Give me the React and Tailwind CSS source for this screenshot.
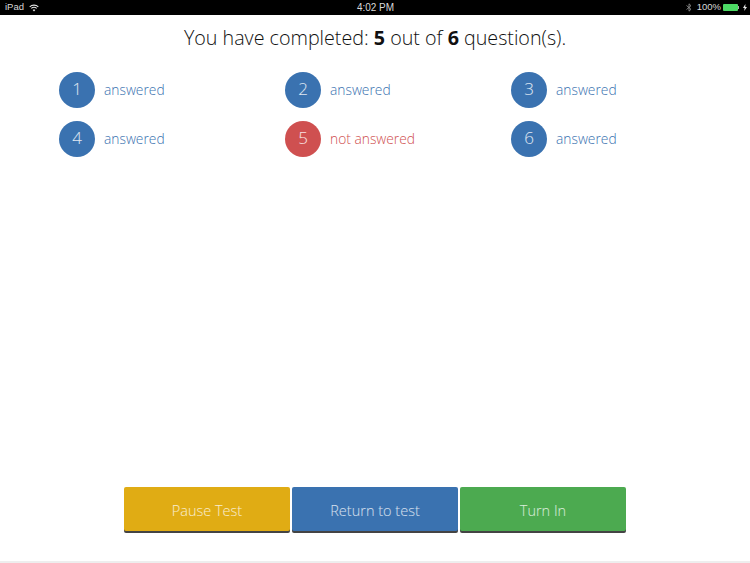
import React from 'react';

const questions = [
  { id: 1, answered: true },
  { id: 2, answered: true },
  { id: 3, answered: true },
  { id: 4, answered: true },
  { id: 5, answered: false },
  { id: 6, answered: true },
];

const StatusBar = () => (
  <div className="h-[15px] bg-black text-[#d8d8d8] text-[9.5px] font-['Liberation_Sans',sans-serif] flex items-center justify-between pl-[5px] pr-[3px] relative">
    <div className="flex items-center gap-[5px]">
      <span>iPad</span>
      <svg width="10" height="8" viewBox="0 0 10 8" fill="none" stroke="#e8e8e8">
        <path d="M0.7 2.8C3 0.6 7 0.6 9.3 2.8" strokeWidth="1.1" />
        <path d="M2.3 4.4C3.8 3.1 6.2 3.1 7.7 4.4" strokeWidth="1.1" />
        <path d="M5 7.6L3.7 6C4.4 5.4 5.6 5.4 6.3 6Z" fill="#e8e8e8" stroke="none" />
      </svg>
    </div>
    <span className="absolute left-[1px] right-0 text-center text-[10px]">4:02 PM</span>
    <div className="flex items-center">
      <svg width="6" height="9" viewBox="0 0 6 9" fill="none" stroke="#999" strokeWidth="0.8" className="mr-[5px]">
        <path d="M0.5 2.5L5 6.3L3 8.2V0.8L5 2.7L0.5 6.5" />
      </svg>
      <span>100%</span>
      <div className="w-[15px] h-[7px] bg-[#4cd964] rounded-[1px] ml-[2px]"></div>
      <div className="w-[1px] h-[3px] bg-[#aaa] mr-[4px]"></div>
      <svg width="4" height="7" viewBox="0 0 4 7" fill="#e8e8e8">
        <path d="M2.4 0L0 3.9H1.6L1.2 7L4 2.9H2.3Z" />
      </svg>
    </div>
  </div>
);

const QuestionItem = ({ id, answered }) => (
  <div className="flex items-center h-[37px]">
    <div className={`w-[36px] h-[36px] rounded-full flex items-center justify-center pb-[1px] text-white/85 text-[17px] font-light ${answered ? 'bg-[#3a72b0]' : 'bg-[#cf5050]'}`}>
      {id}
    </div>
    <span className={`ml-[9px] pt-[2px] text-[13.8px] font-light ${answered ? 'text-[#3a72b0]' : 'text-[#cf5050]'}`}>
      {answered ? 'answered' : 'not answered'}
    </span>
  </div>
);

const ActionButton = ({ color, children }) => (
  <button className={`w-[166px] h-[44px] mb-[2px] rounded-[2px] shadow-[0_2px_0_#444] text-white/80 text-[14.5px] font-light pt-[4px] ${color}`}>
    {children}
  </button>
);

export default function App() {
  return (
    <div className="w-[750px] h-[563px] bg-white flex flex-col overflow-hidden font-['Open_Sans',sans-serif]">
      <StatusBar />
      <h1 className="mt-[9px] text-center text-[19.7px] font-light leading-[28px] text-[#111]">
        You have completed: <b className="font-bold">5</b> out of <b className="font-bold">6</b> question(s).
      </h1>
      <div className="mt-[19px] pl-[59px] grid grid-cols-[226px_226px_226px] gap-y-[12px]">
        {questions.map((q) => (
          <QuestionItem key={q.id} id={q.id} answered={q.answered} />
        ))}
      </div>
      <div className="mt-auto flex justify-center gap-[2px]">
        <ActionButton color="bg-[#e0ac14]">Pause Test</ActionButton>
        <ActionButton color="bg-[#3a72b0]">Return to test</ActionButton>
        <ActionButton color="bg-[#4caa50]">Turn In</ActionButton>
      </div>
      <div className="mt-[28px] h-[2px] bg-[#eeeeee]"></div>
    </div>
  );
}
